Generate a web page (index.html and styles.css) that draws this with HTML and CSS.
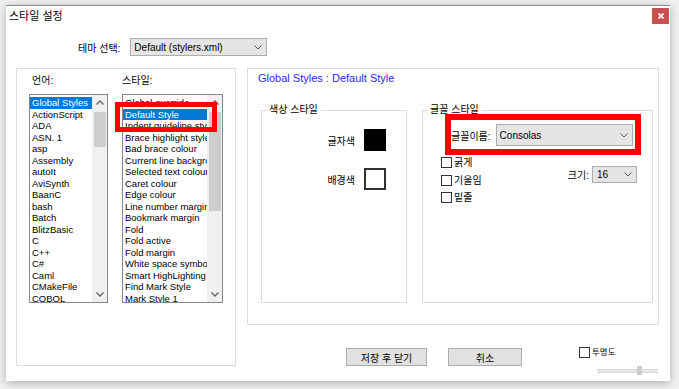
FILE: index.html
```html
<!DOCTYPE html>
<html lang="ko">
<head>
  <meta charset="UTF-8">
  <title>스타일 설정</title>
  <link rel="stylesheet" href="styles.css">
</head>
<body>
  <div class="window">
    <!-- Title bar -->
    <div class="titlebar">
      <div class="title">스타일 설정</div>
      <div class="close">
        <svg width="6" height="6" viewBox="0 0 6 6"><path d="M0.5 0.5 L5.5 5.5 M5.5 0.5 L0.5 5.5" stroke="#fff" stroke-width="1.6"/></svg>
      </div>
    </div>

    <!-- Theme selection -->
    <div class="theme-row">
      <span>테마 선택:</span>
      <div class="select theme-select">
        <span>Default (stylers.xml)</span>
        <svg class="chev" width="8" height="5" viewBox="0 0 8 5"><path d="M0.5 0.5 L4 4 L7.5 0.5" fill="none" stroke="#555"/></svg>
      </div>
    </div>

    <div class="main">
      <!-- Language / style lists -->
      <div class="lang-group">
        <div class="list-col">
          <div class="list-label first">언어:</div>
          <div class="listbox lang-list">
            <div class="items">
              <div class="sel">Global Styles</div>
              <div>ActionScript</div>
              <div>ADA</div>
              <div>ASN. 1</div>
              <div>asp</div>
              <div>Assembly</div>
              <div>autoIt</div>
              <div>AviSynth</div>
              <div>BaanC</div>
              <div>bash</div>
              <div>Batch</div>
              <div>BlitzBasic</div>
              <div>C</div>
              <div>C++</div>
              <div>C#</div>
              <div>Caml</div>
              <div>CMakeFile</div>
              <div>COBOL</div>
            </div>
            <div class="scrollbar">
              <div class="sb-btn"><svg width="8" height="5" viewBox="0 0 8 5"><path d="M0.5 4.5 L4 1 L7.5 4.5" fill="none" stroke="#606060" stroke-width="1.3"/></svg></div>
              <div class="thumb short"></div>
              <div class="sb-btn bottom"><svg width="8" height="5" viewBox="0 0 8 5"><path d="M0.5 0.5 L4 4 L7.5 0.5" fill="none" stroke="#606060" stroke-width="1.3"/></svg></div>
            </div>
          </div>
        </div>
        <div class="list-col">
          <div class="list-label">스타일:</div>
          <div class="listbox style-list">
            <div class="items">
              <div>Global override</div>
              <div class="sel">Default Style</div>
              <div>Indent guideline style</div>
              <div>Brace highlight style</div>
              <div>Bad brace colour</div>
              <div>Current line background colour</div>
              <div>Selected text colour</div>
              <div>Caret colour</div>
              <div>Edge colour</div>
              <div>Line number margin</div>
              <div>Bookmark margin</div>
              <div>Fold</div>
              <div>Fold active</div>
              <div>Fold margin</div>
              <div>White space symbol</div>
              <div>Smart HighLighting</div>
              <div>Find Mark Style</div>
              <div>Mark Style 1</div>
            </div>
            <div class="scrollbar">
              <div class="sb-btn"><svg width="8" height="5" viewBox="0 0 8 5"><path d="M0.5 4.5 L4 1 L7.5 4.5" fill="none" stroke="#606060" stroke-width="1.3"/></svg></div>
              <div class="thumb long"></div>
              <div class="sb-btn bottom"><svg width="8" height="5" viewBox="0 0 8 5"><path d="M0.5 0.5 L4 4 L7.5 0.5" fill="none" stroke="#606060" stroke-width="1.3"/></svg></div>
            </div>
          </div>
        </div>
      </div>

      <div class="right">
        <!-- Style settings panel -->
        <div class="panel">
          <div class="panel-title">Global Styles : Default Style</div>
          <div class="groups">
            <fieldset class="color-group">
              <legend>색상 스타일</legend>
              <div class="color-grid">
                <span class="color-label">글자색</span>
                <div class="swatch black"></div>
                <span class="color-label">배경색</span>
                <div class="swatch white"></div>
              </div>
            </fieldset>
            <fieldset class="font-group">
              <legend>글꼴 스타일</legend>
              <div class="font-name">
                <span>글꼴이름:</span>
                <div class="select font-select">
                  <span>Consolas</span>
                  <svg class="chev" width="8" height="5" viewBox="0 0 8 5"><path d="M0.5 0.5 L4 4 L7.5 0.5" fill="none" stroke="#555"/></svg>
                </div>
              </div>
              <div class="font-opts">
                <div class="checks">
                  <div class="check"><span class="box"></span><span>굵게</span></div>
                  <div class="check"><span class="box"></span><span>기울임</span></div>
                  <div class="check"><span class="box"></span><span>밑줄</span></div>
                </div>
                <div class="size">
                  <span>크기:</span>
                  <div class="select size-select">
                    <span>16</span>
                    <svg class="chev" width="8" height="5" viewBox="0 0 8 5"><path d="M0.5 0.5 L4 4 L7.5 0.5" fill="none" stroke="#555"/></svg>
                  </div>
                </div>
              </div>
            </fieldset>
          </div>
        </div>

        <!-- Bottom buttons -->
        <div class="footer">
          <div class="btn save">저장 후 닫기</div>
          <div class="btn cancel">취소</div>
          <div class="opacity">
            <div class="check"><span class="box"></span><span class="opacity-label">투명도</span></div>
            <div class="slider"><div class="slider-thumb"></div></div>
          </div>
        </div>
      </div>
    </div>

    <!-- Red highlight marks -->
    <div class="mark mark-style"></div>
    <div class="mark mark-font"></div>
  </div>
</body>
</html>
```

FILE: styles.css
```css
* {
  margin: 0;
  padding: 0;
  box-sizing: border-box;
}

body {
  width: 679px;
  height: 389px;
  overflow: hidden;
  background: #f1f1f1;
  padding: 5px 0 0 6px;
  font-family: "Liberation Sans", "Noto Sans CJK KR", sans-serif;
  font-size: 10px;
  color: #000;
}

.window {
  position: relative;
  width: 664px;
  height: 376px;
  background: #fff;
  border-top: 1px solid #8c8c8c;
  box-shadow: 0 2px 9px rgba(0, 0, 0, 0.28);
}

.titlebar {
  display: flex;
  justify-content: space-between;
  height: 21px;
}

.title {
  font-family: "Noto Sans CJK KR", sans-serif;
  font-size: 11px;
  line-height: 18px;
  padding-left: 3px;
}

.close {
  width: 17px;
  height: 16px;
  margin: 2px 1px 0 0;
  background: #c75050;
  display: flex;
  align-items: center;
  justify-content: center;
}

.theme-row {
  display: flex;
  align-items: center;
  gap: 10px;
  margin-top: 11px;
  padding-left: 72px;
}

.select {
  display: flex;
  align-items: center;
  justify-content: space-between;
  border: 1px solid #adadad;
  background: #e5e5e5;
  padding: 0 4px 0 3px;
  font-size: 10px;
}

.theme-select {
  width: 137px;
  height: 18px;
}

.main {
  display: flex;
  margin-top: 12px;
  padding-left: 10px;
}

/* left group with the two lists */
.lang-group {
  width: 220px;
  height: 298px;
  border: 1px solid #dcdcdc;
  display: flex;
  gap: 14px;
  padding-left: 12px;
}

.list-col {
  display: flex;
  flex-direction: column;
}

.list-label {
  margin-top: 4px;
  height: 16px;
  line-height: 16px;
}

.list-label.first {
  padding-left: 3px;
}

.listbox {
  margin-top: 5px;
  height: 209px;
  border: 1px solid #828790;
  display: flex;
  overflow: hidden;
  background: #fff;
}

.lang-list {
  width: 79px;
}

.style-list {
  width: 101px;
}

.items {
  flex: 1;
  min-width: 0;
  overflow: hidden;
  padding-top: 2px;
}

.items div {
  height: 11.5px;
  line-height: 11.5px;
  padding-left: 2px;
  white-space: nowrap;
  font-size: 9.5px;
}

.items .sel {
  background: #0078d7;
  color: #fff;
}

.scrollbar {
  width: 15px;
  background: #f0f0f0;
  display: flex;
  flex-direction: column;
  align-items: center;
}

.sb-btn {
  height: 15px;
  display: flex;
  align-items: center;
  justify-content: center;
}

.sb-btn.bottom {
  margin-top: auto;
}

.thumb {
  width: 12px;
  margin-top: 2px;
  background: #cdcdcd;
}

.thumb.short {
  height: 35px;
}

.thumb.long {
  height: 99px;
}

/* right side */
.right {
  margin-left: 11px;
  width: 412px;
  display: flex;
  flex-direction: column;
}

.panel {
  height: 257px;
  border: 1px solid #dcdcdc;
  padding: 2px 0 0 10px;
}

.panel-title {
  color: #2b2bf0;
  font-size: 11px;
  line-height: 14px;
}

.groups {
  display: flex;
  gap: 15px;
  margin-top: 18px;
  padding-left: 3px;
}

fieldset {
  border: 1px solid #dcdcdc;
  padding: 0 0 0 4px;
  margin: 0;
  min-width: 0;
  height: 200px;
}

legend {
  padding: 0 3px;
  font-size: 10px;
  line-height: 14px;
}

.color-group {
  width: 146px;
}

.color-grid {
  display: grid;
  grid-template-columns: 89px 22px;
  column-gap: 9px;
  row-gap: 17px;
  align-items: center;
  margin-top: 12px;
}

.color-label {
  text-align: right;
}

.swatch {
  width: 22px;
  height: 22px;
}

.swatch.black {
  background: #000;
}

.swatch.white {
  background: #fff;
  border: 2px solid #333;
}

.font-group {
  width: 231px;
}

.font-name {
  display: flex;
  align-items: center;
  gap: 5px;
  margin-top: 7px;
  padding-left: 24px;
}

.font-select {
  width: 137px;
  height: 22px;
}

.font-opts {
  display: flex;
  margin-top: 11px;
  padding-left: 14px;
}

.check {
  display: flex;
  align-items: center;
  gap: 2px;
  height: 11px;
  line-height: 11px;
}

.checks .check {
  margin-bottom: 6.5px;
}

.box {
  width: 11px;
  height: 11px;
  border: 1px solid #333;
  background: #fff;
}

.size {
  display: flex;
  align-items: center;
  gap: 3px;
  margin: 9px 15px 0 auto;
  align-self: flex-start;
}

.size-select {
  width: 45px;
  height: 17px;
  padding-left: 4px;
}

.footer {
  display: flex;
  align-items: flex-start;
  padding: 22px 0 0 99px;
}

.btn {
  margin-top: 1px;
  height: 18px;
  border: 1px solid #adadad;
  background: #e1e1e1;
  display: flex;
  align-items: center;
  justify-content: center;
}

.save {
  width: 81px;
}

.cancel {
  width: 74px;
  margin-left: 21px;
}

.opacity {
  margin-left: auto;
  width: 80px;
  display: flex;
  flex-direction: column;
}

.opacity-label {
  font-size: 8.5px;
}

.slider {
  align-self: flex-end;
  margin: 8px 1px 0 0;
  width: 61px;
  height: 9px;
  background: linear-gradient(#fff 0 3px, #d8d8d8 3px 4px, #e9e9e9 4px 6px, #d8d8d8 6px 7px, #fff 7px);
}

.slider-thumb {
  width: 5px;
  height: 9px;
  margin-left: 40px;
  background: #cbcbcb;
}

/* red annotation boxes drawn over the dialog */
.mark {
  position: absolute;
  border: 5px solid #ff0000;
}

.mark-style {
  left: 109px;
  top: 96px;
  width: 102px;
  height: 30px;
}

.mark-font {
  left: 439px;
  top: 108px;
  width: 196px;
  height: 41px;
  border-width: 6px;
}
```
